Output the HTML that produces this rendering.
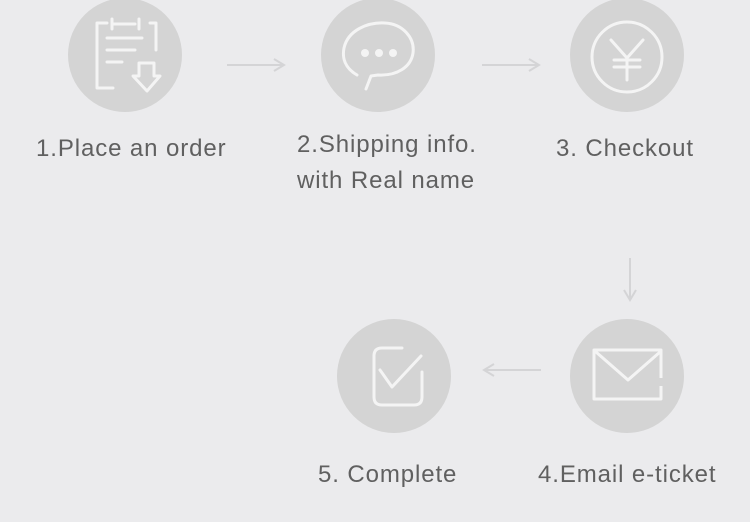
<!DOCTYPE html>
<html><head><meta charset="utf-8"><style>
html,body{margin:0;padding:0;background:#ebebed;}
body{width:750px;height:522px;position:relative;overflow:hidden;font-family:"Liberation Sans",sans-serif;color:#606060;}
.t{position:absolute;font-size:24px;line-height:33px;white-space:nowrap;letter-spacing:0.9px;}
svg{position:absolute;left:0;top:0;}
</style></head><body>
<svg width="750" height="522" viewBox="0 0 750 522">
<g fill="#d4d4d4">
<circle cx="125" cy="55" r="57"/>
<circle cx="378" cy="55" r="57"/>
<circle cx="627" cy="55" r="57"/>
<circle cx="627" cy="376" r="57"/>
<circle cx="394" cy="376" r="57"/>
</g>
<g fill="none" stroke="#d4d4d6" stroke-width="2">
<path d="M227 65H283M274 59L284 65L274 71"/>
<path d="M482 65H538M529 59L539 65L529 71"/>
<path d="M630 258V299M624 290L630 300L636 290"/>
<path d="M541 370H485M494 364L484 370L494 376"/>
</g>
<g fill="none" stroke="#f4f4f4" stroke-width="3" stroke-linecap="round" stroke-linejoin="round">
<path d="M107 23H97V88H113"/>
<path d="M150 23H156V50"/>
<path d="M112 24H135"/>
<path d="M112 19V29M139 19V29"/>
<path d="M107 38H142M107 50H135M107 62H122"/>
<path d="M139 63V76H133L147 91L160 76H154V63Z"/>
<path d="M357 75C345 68 342 58 344 48C348 30 368 22 385 23C403 24 415 38 413 53C411 67 397 76 378 75L371 76L366 89"/>
<circle cx="627" cy="57" r="35"/>
<path d="M611 40L627 58L643 40M627 58V80M614 60H640M614 67H640"/>
<path d="M661 379V399H594V350H661V379M661 360" />
<path d="M596 352L628 380L660 352"/>
<path d="M402 348H382Q374 348 374 356V397Q374 405 382 405H414Q422 405 422 397V372"/>
<path d="M380 370L392 387L421 356"/>
</g>
<g fill="#f4f4f4"><circle cx="365" cy="53" r="4"/><circle cx="379" cy="53" r="4"/><circle cx="393" cy="53" r="4"/></g>
<rect x="658" y="378" width="6" height="8" fill="#d4d4d4"/>
</svg>
<div class="t" style="left:36px;top:132px;">1.Place an order</div>
<div class="t" style="left:297px;top:128px;">2.Shipping info.</div>
<div class="t" style="left:297px;top:164px;">with Real name</div>
<div class="t" style="left:556px;top:132px;">3. Checkout</div>
<div class="t" style="left:318px;top:458px;">5. Complete</div>
<div class="t" style="left:538px;top:458px;">4.Email e-ticket</div>
</body></html>
